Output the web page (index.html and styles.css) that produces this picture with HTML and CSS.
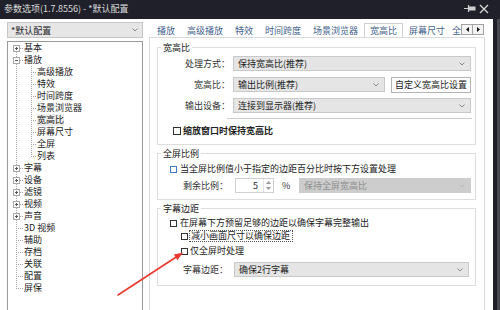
FILE: index.html
```html
<!DOCTYPE html>
<html lang="zh-CN">
<head>
<meta charset="utf-8">
<title>参数选项</title>
<link rel="stylesheet" href="styles.css">
</head>
<body>
<div class="titlebar">
  <span class="title">参数选项(1.7.8556) - *默认配置</span>
  <span class="tb-controls">
    <svg class="pin" width="12" height="9" viewBox="0 0 12 9"><path d="M0 4.5H4M4.5 1V8" stroke="#cfcfcf" stroke-width="1.2" fill="none"/><rect x="5" y="2.5" width="6.5" height="4" fill="#cfcfcf"/></svg>
    <svg class="close" width="10" height="10" viewBox="0 0 10 10"><path d="M1 1L9 9M9 1L1 9" stroke="#d6d6d6" stroke-width="1.3" fill="none"/></svg>
  </span>
</div>
<div class="main">
  <div class="window">
    <div class="sidebar">
      <div class="profile"><span>*默认配置</span><svg class="chev" width="6" height="4" viewBox="0 0 6 4"><path d="M0.5 0.5L3 3L5.5 0.5" stroke="#888" fill="none"/></svg></div>
      <div class="tree">
        <ul class="tree-root">
          <li><div class="row"><span class="exp plus"></span><span class="lbl">基本</span></div></li>
          <li><div class="row"><span class="exp minus"></span><span class="lbl">播放</span></div>
            <ul class="tree-sub">
              <li><div class="row child"><span class="lbl">高级播放</span></div></li>
              <li><div class="row child"><span class="lbl">特效</span></div></li>
              <li><div class="row child"><span class="lbl">时间跨度</span></div></li>
              <li><div class="row child"><span class="lbl">场景浏览器</span></div></li>
              <li><div class="row child"><span class="lbl selected">宽高比</span></div></li>
              <li><div class="row child"><span class="lbl">屏幕尺寸</span></div></li>
              <li><div class="row child"><span class="lbl">全屏</span></div></li>
              <li><div class="row child"><span class="lbl">列表</span></div></li>
            </ul>
          </li>
          <li><div class="row"><span class="exp plus"></span><span class="lbl">字幕</span></div></li>
          <li><div class="row"><span class="exp plus"></span><span class="lbl">设备</span></div></li>
          <li><div class="row"><span class="exp plus"></span><span class="lbl">滤镜</span></div></li>
          <li><div class="row"><span class="exp plus"></span><span class="lbl">视频</span></div></li>
          <li><div class="row"><span class="exp plus"></span><span class="lbl">声音</span></div></li>
          <li><div class="row leaf"><span class="exp none"></span><span class="lbl">3D 视频</span></div></li>
          <li><div class="row leaf"><span class="exp none"></span><span class="lbl">辅助</span></div></li>
          <li><div class="row leaf"><span class="exp none"></span><span class="lbl">存档</span></div></li>
          <li><div class="row leaf"><span class="exp none"></span><span class="lbl">关联</span></div></li>
          <li><div class="row leaf"><span class="exp none"></span><span class="lbl">配置</span></div></li>
          <li><div class="row leaf"><span class="exp none"></span><span class="lbl">屏保</span></div></li>
        </ul>
      </div>
    </div>
    <div class="content">
      <div class="tabbar">
        <div class="tabs">
          <span class="tab">播放</span>
          <span class="tab">高级播放</span>
          <span class="tab">特效</span>
          <span class="tab">时间跨度</span>
          <span class="tab">场景浏览器</span>
          <span class="tab active">宽高比</span>
          <span class="tab">屏幕尺寸</span>
          <span class="tab last">全</span>
        </div>
        <div class="tabscroll">
          <span class="sbtn"><svg width="3" height="5" viewBox="0 0 3 5"><path d="M3 0V5L0 2.5Z" fill="#111"/></svg></span>
          <span class="sbtn"><svg width="3" height="5" viewBox="0 0 3 5"><path d="M0 0V5L3 2.5Z" fill="#111"/></svg></span>
        </div>
      </div>
      <div class="panel">
        <div class="group g1">
          <div class="gtitle">宽高比</div>
          <div class="form-row r1">
            <span class="label">处理方式：</span>
            <div class="select"><span>保持宽高比(推荐)</span><svg class="chev" width="6" height="4" viewBox="0 0 6 4"><path d="M0.5 0.5L3 3L5.5 0.5" stroke="#888" fill="none"/></svg></div>
          </div>
          <div class="form-row">
            <span class="label">宽高比：</span>
            <div class="select"><span>输出比例(推荐)</span><svg class="chev" width="6" height="4" viewBox="0 0 6 4"><path d="M0.5 0.5L3 3L5.5 0.5" stroke="#888" fill="none"/></svg></div>
            <span class="button">自定义宽高比设置</span>
          </div>
          <div class="form-row">
            <span class="label">输出设备：</span>
            <div class="select"><span>连接到显示器(推荐)</span><svg class="chev" width="6" height="4" viewBox="0 0 6 4"><path d="M0.5 0.5L3 3L5.5 0.5" stroke="#888" fill="none"/></svg></div>
          </div>
          <div class="sep"></div>
          <div class="check-row bold-row"><span class="cb"></span><span class="ctext">缩放窗口时保持宽高比</span></div>
        </div>

        <div class="group g2">
          <div class="gtitle">全屏比例</div>
          <div class="check-row c-a"><span class="cb blue"></span><span class="ctext">当全屏比例值小于指定的边距百分比时按下方设置处理</span></div>
          <div class="form-row r-ratio">
            <span class="label short">剩余比例：</span>
            <div class="spin"><span class="val">5</span><span class="arrows"><svg width="5" height="3" viewBox="0 0 5 3"><path d="M0 3L2.5 0L5 3Z" fill="#999"/></svg><svg width="5" height="3" viewBox="0 0 5 3"><path d="M0 0L2.5 3L5 0Z" fill="#999"/></svg></span></div>
            <span class="pct">%</span>
            <div class="select disabled"><span>保持全屏宽高比</span><svg class="chev" width="6" height="4" viewBox="0 0 6 4"><path d="M0.5 0.5L3 3L5.5 0.5" stroke="#b5b5b5" fill="none"/></svg></div>
          </div>
        </div>

        <div class="group g3">
          <div class="gtitle">字幕边距</div>
          <div class="check-row c1"><span class="cb"></span><span class="ctext">在屏幕下方预留足够的边距以确保字幕完整输出</span></div>
          <div class="check-row c2"><span class="cb"></span><span class="ctext focus">减小画面尺寸以确保边距</span></div>
          <div class="check-row c3"><span class="cb"></span><span class="ctext">仅全屏时处理</span></div>
          <div class="form-row r-sub">
            <span class="label mid">字幕边距：</span>
            <div class="select"><span>确保2行字幕</span><svg class="chev" width="6" height="4" viewBox="0 0 6 4"><path d="M0.5 0.5L3 3L5.5 0.5" stroke="#888" fill="none"/></svg></div>
          </div>
        </div>
      </div>
    </div>
  </div>
  <div class="edge"><div class="edge-inner"></div></div>
</div>
<svg class="annot" width="500" height="310" viewBox="0 0 500 310">
  <path d="M118 295L177 256.5" stroke="#e8392f" stroke-width="1.6" fill="none" stroke-linecap="round"/>
  <path d="M183 252.5L177.4 260.2L173.8 254.6Z" fill="#e8392f"/>
</svg>
</body>
</html>
```

FILE: styles.css
```css
* { box-sizing: border-box; }
html, body { margin: 0; padding: 0; }
body {
  width: 500px;
  height: 310px;
  overflow: hidden;
  position: relative;
  background: #ffffff;
  font-family: "Noto Sans CJK SC", "Noto Sans", sans-serif;
  font-size: 9px;
  color: #333;
}
ul { list-style: none; margin: 0; padding: 0; }

.titlebar {
  height: 19px;
  background: #1f2029;
  display: flex;
  align-items: center;
  padding: 0 11px 2px 4px;
  color: #dedede;
}
.title { line-height: 12px; }
.tb-controls { margin-left: auto; display: flex; align-items: center; gap: 3px; }

.main { display: flex; height: 291px; }
.window { flex: 0 0 493px; display: flex; background: #fff; }
.edge { flex: 1; background: #1f2029; display: flex; justify-content: flex-end; }
.edge-inner { width: 3px; background: #484951; }

.sidebar { width: 143px; padding: 3px 0 0 7px; display: flex; flex-direction: column; }
.profile {
  height: 16px;
  border: 1px solid #c6c6c6;
  background: #e6e6e6;
  display: flex;
  align-items: center;
  padding: 0 4px 0 3px;
  color: #222;
}
.chev { margin-left: auto; flex: none; }
.tree {
  margin-top: 3px;
  flex: 1;
  border: 1px solid #9a9a9a;
  border-bottom: none;
  color: #222;
}
.tree-root {
  background-image: repeating-linear-gradient(to bottom, #a4a4a4 0 1px, transparent 1px 2px);
  background-size: 1px calc(100% - 12px);
  background-position: 8px 6px;
  background-repeat: no-repeat;
}
.row {
  height: 12px;
  display: flex;
  align-items: center;
  padding-left: 5px;
  line-height: 12px;
  white-space: nowrap;
  background-image: repeating-linear-gradient(to right, #a4a4a4 0 1px, transparent 1px 2px);
  background-size: 8px 1px;
  background-position: 8px 6px;
  background-repeat: no-repeat;
}
.exp {
  flex: none;
  width: 7px;
  height: 7px;
  margin-right: 4px;
  border: 1px solid #a8a8a8;
  background-color: #fff;
}
.exp.plus {
  background-image: linear-gradient(#555, #555), linear-gradient(#555, #555);
  background-size: 3px 1px, 1px 3px;
  background-position: center, center;
  background-repeat: no-repeat;
}
.exp.minus {
  background-image: linear-gradient(#555, #555);
  background-size: 3px 1px;
  background-position: center;
  background-repeat: no-repeat;
}
.exp.none { border: none; background: transparent; }
.tree-sub {
  background-image: repeating-linear-gradient(to bottom, #a4a4a4 0 1px, transparent 1px 2px);
  background-size: 1px calc(100% - 6px);
  background-position: 23px 0;
  background-repeat: no-repeat;
}
.row.child {
  padding-left: 29px;
  background-size: 6px 1px;
  background-position: 23px 6px;
}
.lbl.selected { background: #ebebeb; }

.content { margin-left: 6px; width: 336px; display: flex; flex-direction: column; }
.tabbar { height: 18px; display: flex; align-items: flex-end; padding-left: 2px; }
.tabs {
  flex: 1;
  height: 14px;
  display: flex;
  overflow: hidden;
  white-space: nowrap;
}
.tab {
  flex: none;
  padding: 1px 6px 0;
  line-height: 13px;
  color: #44618a;
}
.tab.last { padding-left: 1px; padding-right: 0; }
.tab.active {
  position: relative;
  padding: 0 5px;
  border: 1px solid #cfcfcf;
  border-bottom: none;
  background: #fff;
  height: 15px;
}
.tabscroll { display: flex; margin: 0 1px 2px 0; }
.sbtn {
  width: 12px;
  height: 11px;
  border: 1px solid #a3a3a3;
  background: #f3f3f3;
  display: flex;
  align-items: center;
  justify-content: center;
}
.sbtn + .sbtn { border-left: none; width: 11px; }

.panel {
  flex: 1;
  border: 1px solid #dadada;
  border-bottom: none;
  padding: 9px 8px 0 7px;
}
.group { border: 1px solid #dedede; margin-bottom: 8px; }
.gtitle {
  display: table;
  margin: -6px 0 0 3px;
  padding: 0 2px;
  line-height: 11px;
  background: #fff;
  color: #222;
}
.g1 { padding-bottom: 7px; }
.g2 { padding-bottom: 6px; }
.g3 { padding-bottom: 8px; }

.form-row {
  height: 15px;
  display: flex;
  align-items: flex-start;
  margin-top: 6px;
  padding-right: 4px;
}
.form-row.r1 { margin-top: 3px; }
.label {
  flex: none;
  width: 72px;
  margin-right: 3px;
  text-align: right;
  line-height: 15px;
  color: #333;
}
.label.short { width: 70px; margin-right: 7px; }
.label.mid { width: 70px; margin-right: 6px; }
.select {
  flex: 1;
  height: 15px;
  border: 1px solid #c9c9c9;
  background: #e5e5e5;
  display: flex;
  align-items: center;
  padding: 0 5px 0 4px;
  color: #222;
  line-height: 13px;
}
.select.disabled { background: #cdcdcd; border-color: #cdcdcd; color: #8d8d8d; }
.button {
  flex: none;
  width: 80px;
  height: 16px;
  margin-left: 6px;
  border: 1px solid #b4b4b4;
  background: #fdfdfd;
  text-align: center;
  line-height: 14px;
  color: #222;
}
.sep { height: 1px; background: #cdcdcd; margin: 5px 3px 0 69px; }

.check-row {
  height: 12px;
  display: flex;
  align-items: center;
  margin-top: 6px;
  padding-left: 15px;
  line-height: 12px;
  white-space: nowrap;
  color: #222;
}
.bold-row .ctext { font-weight: bold; }
.cb {
  flex: none;
  width: 8px;
  height: 8px;
  border: 1px solid #333;
  background: #fff;
  margin-right: 2px;
}
.cb.blue { border-color: #3e7cc6; width: 7px; height: 7px; margin-right: 3px; }
.c-a { margin-top: 4px; padding-left: 12px; }
.c1 { margin-top: 3px; padding-left: 12px; }
.c1 .cb { width: 7px; height: 7px; margin-right: 3px; }
.c2 { margin-top: 1px; padding-left: 23px; }
.c3 { margin-top: 3px; padding-left: 23px; }
.c2 .cb, .c3 .cb { width: 7px; height: 7px; margin-right: 2px; }
.ctext.focus { outline: 1px dotted #555; outline-offset: 0; padding: 0 2px 0 1px; line-height: 10px; }

.r-ratio { margin-top: 3px; }
.spin {
  flex: none;
  width: 39px;
  height: 15px;
  border: 1px solid #cfcfcf;
  background: #fff;
  display: flex;
  align-items: center;
  justify-content: flex-end;
  padding-right: 1px;
  line-height: 13px;
}
.spin .val { margin-right: 5px; color: #222; }
.spin .arrows {
  width: 9px;
  height: 13px;
  border-left: 1px solid #e3e3e3;
  display: flex;
  flex-direction: column;
  align-items: center;
  justify-content: space-around;
  padding: 1px 0;
}
.pct { flex: none; width: 25px; padding-left: 8px; line-height: 15px; color: #333; }
.r-sub { margin-top: 5px; padding-right: 6px; }

.annot { position: absolute; left: 0; top: 0; pointer-events: none; }
```
